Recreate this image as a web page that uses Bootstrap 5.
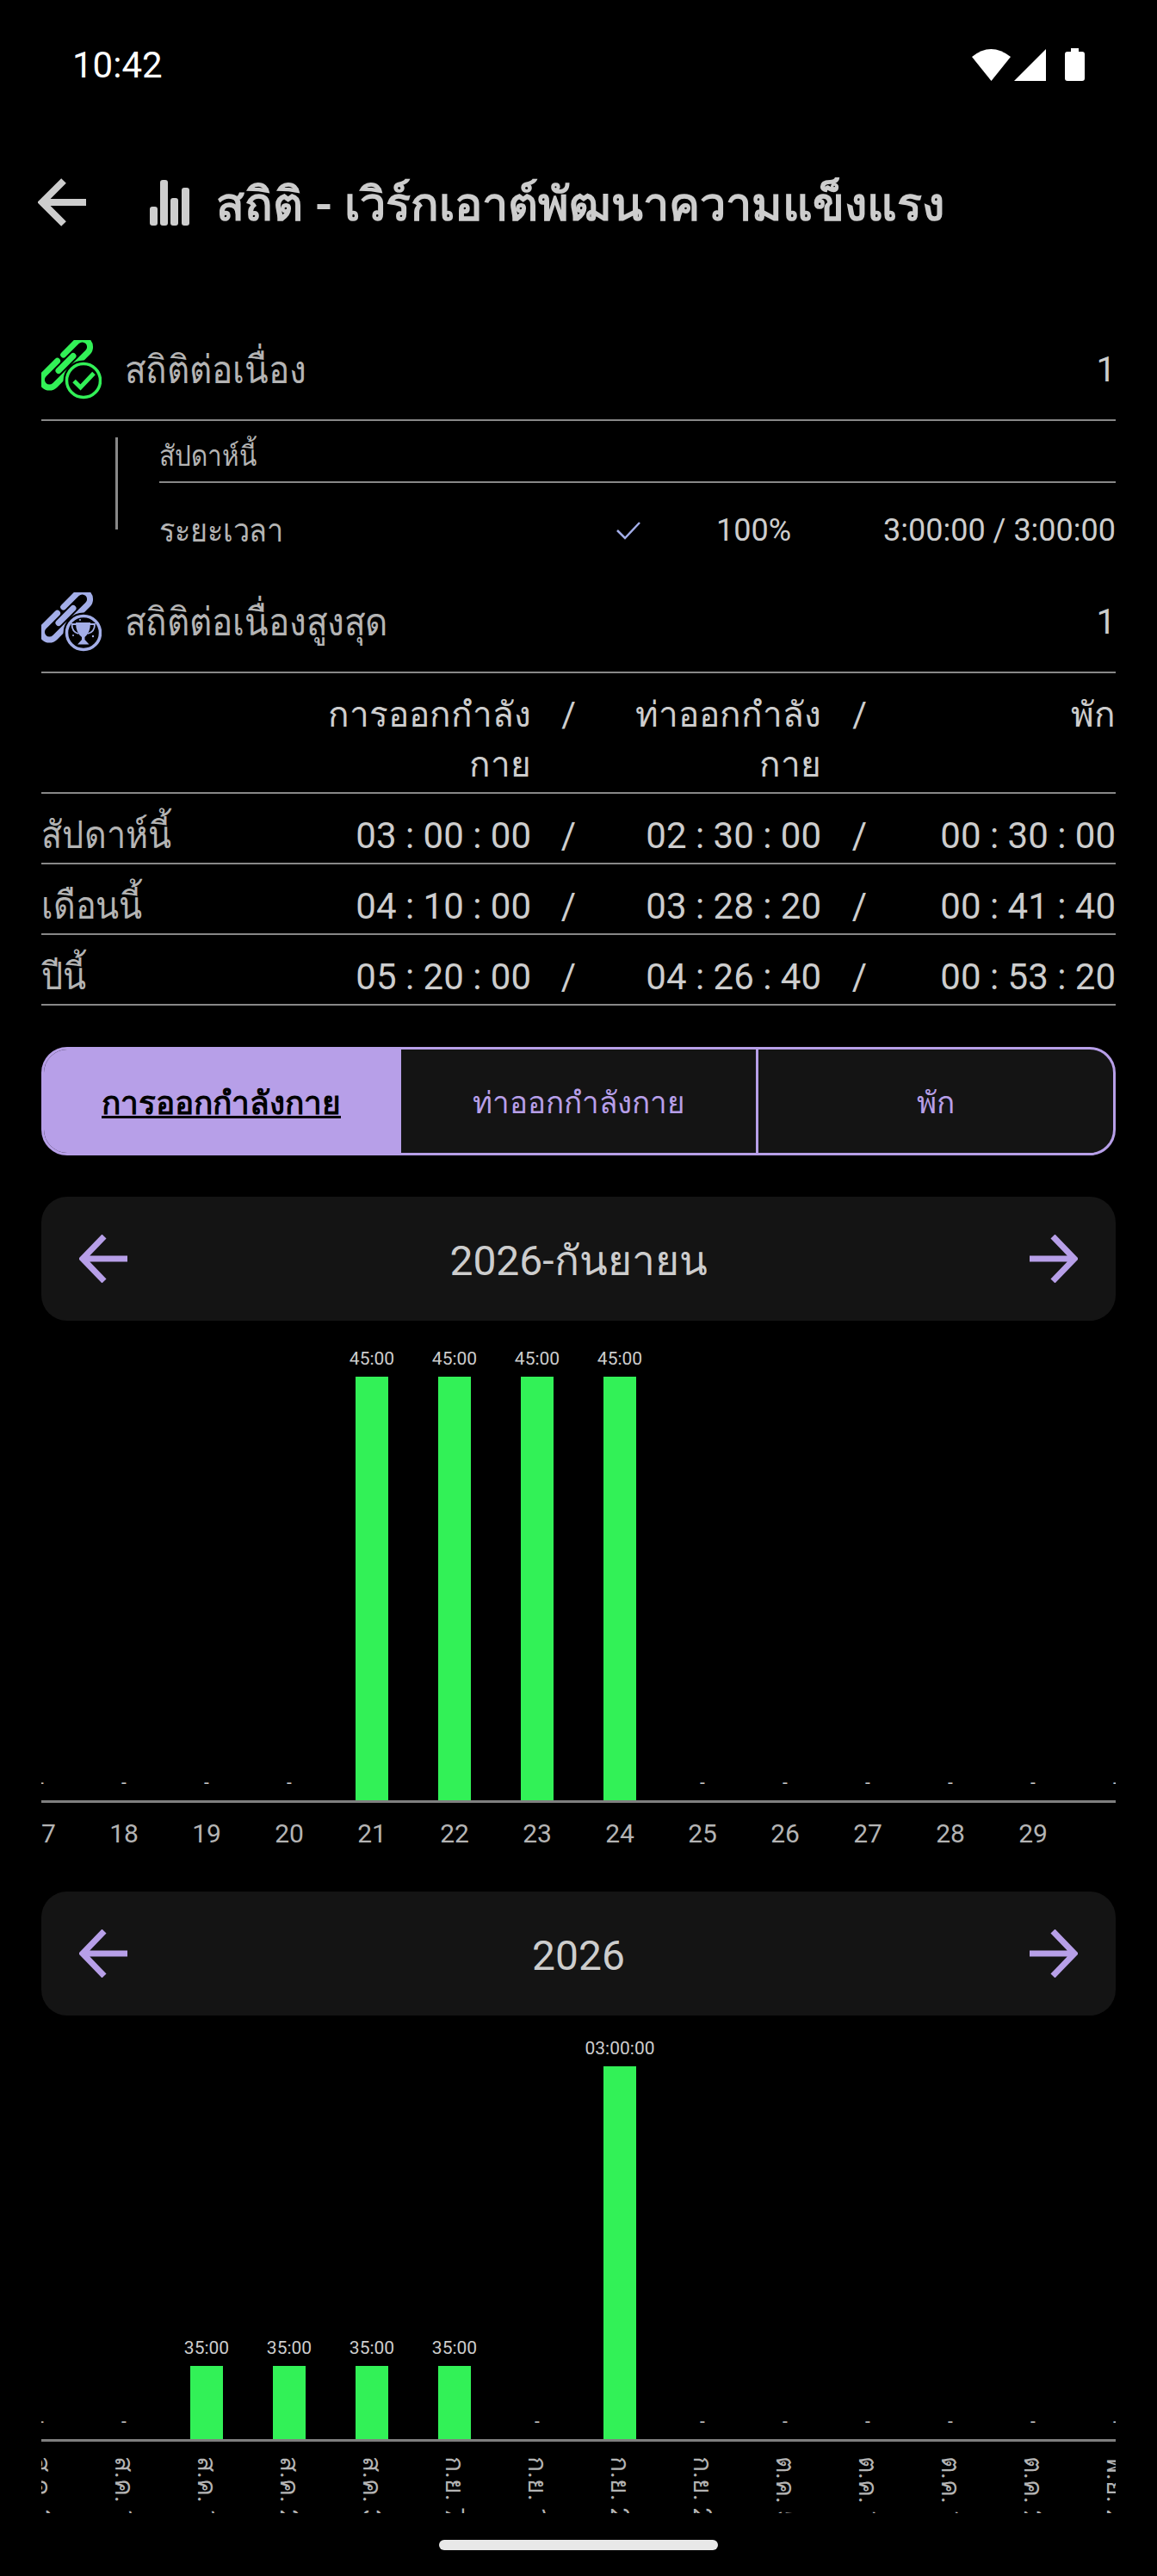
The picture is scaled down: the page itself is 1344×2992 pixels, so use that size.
<!DOCTYPE html>
<html lang="th">
<head>
    <meta charset="UTF-8">
    <meta name="viewport" content="width=device-width, initial-scale=1.0">
    <title>สถิติ</title>
    <link rel="stylesheet" href="https://cdn.jsdelivr.net/npm/bootstrap@5.3.0/dist/css/bootstrap.min.css">
    <style>
        body { background: #000; color: #cdcdcd; font-family: Roboto, "Noto Sans", sans-serif; width: 1344px; height: 2992px; overflow: hidden; }
        .status-row { height: 150px; padding: 0 84px; }
        .status-time { color: #fff; font-size: 42px; }
        .status-icons { gap: 4px; }
        .app-row { height: 170px; margin-bottom: 52px; padding-left: 44px; }
        .app-title { font-size: 54px; font-weight: 700; margin: 6px 0 0 31px; line-height: 1; }
        .page-body { padding: 0 48px; }
        /* the Thai in the screenshot is a narrower cut than the one installed here */
        .thai-narrow { display: inline-block; transform: scaleX(.9); transform-origin: left center; white-space: nowrap; }
        .streak-row { height: 117px; border-bottom: 2px solid #888; }
        .streak-label { font-size: 45px; color: #b4b4b4; margin-left: 27px; }
        .streak-value { font-size: 40px; }
        .sub-block { height: 176px; }
        .sub-rule { width: 3px; height: 107px; background: #888; margin: 19px 48px 0 86px; }
        .sub-head { height: 72px; border-bottom: 2px solid #888; font-size: 33px; color: #b4b4b4; padding-top: 16px; }
        .sub-line { height: 104px; font-size: 36px; padding-top: 6px; }
        .sub-name { color: #b4b4b4; font-size: 38px; }
        .sub-pct { margin: 0 107px 0 88px; }
        .stat-grid { display: grid; grid-template-columns: 329px 240px 90px 247px 91px 251px; border-bottom: 2px solid #888; align-items: center; font-size: 42px; height: 82px; padding-top: 15px; }
        .stat-grid.stat-head { height: 140px; font-size: 40.500px; line-height: 58px; padding-top: 19px; align-items: start; }
        .stat-name { color: #b4b4b4; font-size: 44px; }
        .stat-num { text-align: right; }
        .stat-sep { text-align: right; padding-right: 38px; }
        .seg-group { display: flex; height: 126px; margin-top: 48px; border: 3px solid #b79fe8; border-radius: 30px; overflow: hidden; background: #141414; }
        .seg-item { flex: 1; font-size: 35px; color: #b79fe8; border-left: 3px solid #b79fe8; padding-top: 6px; }
        .seg-item.seg-on { background: #b79fe8; color: #000; font-size: 37px; font-weight: 700; border-left: 0; }
        .seg-on span { text-decoration: underline; }
        .period-bar { height: 144px; margin-top: 48px; background: #141414; border-radius: 30px; padding: 0 44px; font-size: 48px; }
        .period-bar span { padding-top: 6px; }
        .period-bar.period-second { margin-top: 0; }
        .chart-clip { overflow: hidden; }
        .chart-plot { width: 1344px; margin-left: -48px; height: 557px; }
        .chart-axis { height: 3px; background: #7f7f7f; }
        .chart-col { width: 96px; flex: none; display: flex; flex-direction: column; justify-content: flex-end; align-items: center; }
        .chart-val { font-size: 21px; line-height: 26px; margin-bottom: 8px; white-space: nowrap; color: #cdcdcd; }
        .chart-bar { width: 38px; background: #32f157; }
        .tick-row { width: 1344px; margin-left: -48px; }
        .tick-day { height: 103px; }
        .tick-day .tick-cell { font-size: 30px; color: #b4b4b4; padding-top: 13px; }
        .tick-month { height: 83px; overflow: hidden; }
        .tick-month .tick-cell { font-size: 30px; color: #b4b4b4; padding-top: 17px; writing-mode: vertical-rl; white-space: nowrap; display: flex; align-items: center; }
        .tick-cell { width: 96px; flex: none; text-align: center; }
        .home-pill { width: 324px; height: 12px; background: #e8e8e8; border-radius: 6px; margin: 31px auto 0; }
    </style>
</head>
<body>

    <!-- Status bar -->
    <div class="status-row d-flex justify-content-between align-items-center">
        <span class="status-time">10:42</span>
        <div class="status-icons d-flex align-items-center">
            <svg width="131" height="38" viewBox="0 0 131 38" fill="#fff">
                <path d="M0 10 Q22 -8 45 10 L22.500 38 Z"/>
                <path d="M49 38 L86 1 V38 Z"/>
                <path d="M115 0 H124 V4 H128 Q131 4 131 7 V35 Q131 38 128 38 H111 Q108 38 108 35 V7 Q108 4 111 4 H115 Z"/>
            </svg>
        </div>
    </div>

    <!-- Title row -->
    <div class="app-row d-flex align-items-center">
        <svg width="130" height="56" viewBox="0 0 130 56" fill="none">
            <path d="M56 28 H4 M30 3 L5 28 L30 53" stroke="#cdcdcd" stroke-width="8"/>
        </svg>
        <svg width="46" height="53" viewBox="0 0 46 53" fill="#cdcdcd">
            <rect x="0" y="31" width="9" height="22" rx="3"/>
            <rect x="12" y="0" width="9" height="53" rx="3"/>
            <rect x="24" y="21" width="9" height="32" rx="3"/>
            <rect x="37" y="9" width="9" height="44" rx="3"/>
        </svg>
        <h1 class="app-title">สถิติ - เวิร์กเอาต์พัฒนาความแข็งแรง</h1>
    </div>

    <div class="page-body">

        <!-- Current streak -->
        <div class="streak-row d-flex align-items-center">
            <svg width="70" height="70" viewBox="0 0 70 70" fill="none">
                <g transform="rotate(-45 28.500 27)" stroke="#32f157" stroke-width="7" stroke-linecap="round">
                    <g transform="translate(28.500 27)">
                        <path d="M-5 -9 H-27 a9 9 0 0 0 0 18 H-5"/>
                        <path d="M5 -9 H27 a9 9 0 0 1 0 18 H5"/>
                        <path d="M-12 0 H12"/>
                    </g>
                </g>
                <circle cx="49" cy="47" r="20" fill="#000" stroke="#000" stroke-width="7"/>
                <circle cx="49" cy="47" r="19.500" stroke="#32f157" stroke-width="3.500"/>
                <path d="M38 47.500 L45.500 55 L61 38.500" stroke="#32f157" stroke-width="5"/>
            </svg>
            <span class="streak-label thai-narrow">สถิติต่อเนื่อง</span>
            <span class="streak-value ms-auto">1</span>
        </div>

        <div class="sub-block d-flex">
            <div class="sub-rule"></div>
            <div class="flex-grow-1">
                <div class="sub-head"><span class="thai-narrow">สัปดาห์นี้</span></div>
                <div class="sub-line d-flex align-items-center">
                    <div class="sub-name flex-grow-1"><span class="thai-narrow">ระยะเวลา</span></div>
                    <svg width="28" height="22" viewBox="0 0 28 22" fill="none">
                        <path d="M1 11 L10 20 L27 2" stroke="#a3aee8" stroke-width="2.500"/>
                    </svg>
                    <span class="sub-pct">100%</span>
                    <span>3:00:00 / 3:00:00</span>
                </div>
            </div>
        </div>

        <!-- Longest streak -->
        <div class="streak-row d-flex align-items-center">
            <svg width="70" height="70" viewBox="0 0 70 70" fill="none">
                <g transform="rotate(-45 28.500 27)" stroke="#a3aee8" stroke-width="7" stroke-linecap="round">
                    <g transform="translate(28.500 27)">
                        <path d="M-5 -9 H-27 a9 9 0 0 0 0 18 H-5"/>
                        <path d="M5 -9 H27 a9 9 0 0 1 0 18 H5"/>
                        <path d="M-12 0 H12"/>
                    </g>
                </g>
                <circle cx="49" cy="47" r="20" fill="#000" stroke="#000" stroke-width="7"/>
                <circle cx="49" cy="47" r="19.500" stroke="#a3aee8" stroke-width="3.500"/>
                <path d="M40 35 H57 Q57 47 50.500 52 V55 L55.500 60.500 H42 L47 55 V52 Q40 47 40 35 Z" fill="#a3aee8"/>
                <path d="M41 37 H35.500 Q35.500 46 43 48 M56 37 H62 Q62 46 54 48" stroke="#a3aee8" stroke-width="1.800"/>
                <circle cx="37" cy="50" r="1" fill="#a3aee8"/>
                <circle cx="60" cy="51" r="1.200" fill="#a3aee8"/>
                <circle cx="45" cy="32" r="1" fill="#a3aee8"/>
            </svg>
            <span class="streak-label thai-narrow">สถิติต่อเนื่องสูงสุด</span>
            <span class="streak-value ms-auto">1</span>
        </div>

        <!-- Totals -->
        <div class="stat-grid stat-head">
            <span></span>
            <span class="stat-num">การออกกำลัง<br>กาย</span>
            <span class="stat-sep">/</span>
            <span class="stat-num">ท่าออกกำลัง<br>กาย</span>
            <span class="stat-sep">/</span>
            <span class="stat-num">พัก</span>
        </div>
        <div class="stat-grid">
            <div class="stat-name"><span class="thai-narrow">สัปดาห์นี้</span></div>
            <span class="stat-num">03 : 00 : 00</span>
            <span class="stat-sep">/</span>
            <span class="stat-num">02 : 30 : 00</span>
            <span class="stat-sep">/</span>
            <span class="stat-num">00 : 30 : 00</span>
        </div>
        <div class="stat-grid">
            <div class="stat-name"><span class="thai-narrow">เดือนนี้</span></div>
            <span class="stat-num">04 : 10 : 00</span>
            <span class="stat-sep">/</span>
            <span class="stat-num">03 : 28 : 20</span>
            <span class="stat-sep">/</span>
            <span class="stat-num">00 : 41 : 40</span>
        </div>
        <div class="stat-grid">
            <div class="stat-name"><span class="thai-narrow">ปีนี้</span></div>
            <span class="stat-num">05 : 20 : 00</span>
            <span class="stat-sep">/</span>
            <span class="stat-num">04 : 26 : 40</span>
            <span class="stat-sep">/</span>
            <span class="stat-num">00 : 53 : 20</span>
        </div>

        <!-- Tabs -->
        <div class="seg-group">
            <div class="seg-item seg-on d-flex justify-content-center align-items-center"><span>การออกกำลังกาย</span></div>
            <div class="seg-item d-flex justify-content-center align-items-center">ท่าออกกำลังกาย</div>
            <div class="seg-item d-flex justify-content-center align-items-center">พัก</div>
        </div>

        <!-- Month chart -->
        <div class="period-bar d-flex justify-content-between align-items-center">
            <svg width="56" height="56" viewBox="0 0 56 56" fill="none"><path d="M56 28 H4 M29 2 L4 28 L29 54" stroke="#b79fe8" stroke-width="7"/></svg>
            <span>2026-กันยายน</span>
            <svg width="56" height="56" viewBox="0 0 56 56" fill="none"><path d="M0 28 H52 M27 2 L52 28 L27 54" stroke="#b79fe8" stroke-width="7"/></svg>
        </div>
        <div class="chart-clip">
            <div class="chart-plot d-flex" id="monthPlot"></div>
            <div class="chart-axis"></div>
            <div class="tick-row tick-day d-flex" id="monthTicks"></div>
        </div>

        <!-- Year chart -->
        <div class="period-bar period-second d-flex justify-content-between align-items-center">
            <svg width="56" height="56" viewBox="0 0 56 56" fill="none"><path d="M56 28 H4 M29 2 L4 28 L29 54" stroke="#b79fe8" stroke-width="7"/></svg>
            <span>2026</span>
            <svg width="56" height="56" viewBox="0 0 56 56" fill="none"><path d="M0 28 H52 M27 2 L52 28 L27 54" stroke="#b79fe8" stroke-width="7"/></svg>
        </div>
        <div class="chart-clip">
            <div class="chart-plot d-flex" id="yearPlot" style="height: 492px"></div>
            <div class="chart-axis"></div>
            <div class="tick-row tick-month d-flex" id="yearTicks"></div>
        </div>
    </div>

    <div class="home-pill"></div>

    <script>
        // label, bar height (0 means no workout that period)
        const monthData = [["-", 0], ["-", 0], ["-", 0], ["-", 0], ["45:00", 492], ["45:00", 492], ["45:00", 492], ["45:00", 492], ["-", 0], ["-", 0], ["-", 0], ["-", 0], ["-", 0], ["-", 0]];
        const yearData = [["-", 0], ["-", 0], ["35:00", 85], ["35:00", 85], ["35:00", 85], ["35:00", 85], ["-", 0], ["03:00:00", 433], ["-", 0], ["-", 0], ["-", 0], ["-", 0], ["-", 0], ["-", 0]];
        const monthTicks = ["17", "18", "19", "20", "21", "22", "23", "24", "25", "26", "27", "28", "29", ""];
        const yearTicks = ["ส.ค. 3", "ส.ค. 10", "ส.ค. 17", "ส.ค. 24", "ส.ค. 31", "ก.ย. 7", "ก.ย. 14", "ก.ย. 21", "ก.ย. 28", "ต.ค. 5", "ต.ค. 12", "ต.ค. 19", "ต.ค. 26", "พ.ย. 2"];

        function fillPlot(id, data) {
            document.getElementById(id).innerHTML = data.map(d =>
                `<div class="chart-col"><span class="chart-val">${d[0]}</span><div class="chart-bar" style="height: ${d[1]}px"></div></div>`
            ).join("");
        }

        function fillTicks(id, data) {
            document.getElementById(id).innerHTML = data.map(t => `<div class="tick-cell">${t}</div>`).join("");
        }

        fillPlot("monthPlot", monthData);
        fillPlot("yearPlot", yearData);
        fillTicks("monthTicks", monthTicks);
        fillTicks("yearTicks", yearTicks);
    </script>

    <script src="https://cdn.jsdelivr.net/npm/bootstrap@5.3.0/dist/js/bootstrap.bundle.min.js"></script>
</body>
</html>
